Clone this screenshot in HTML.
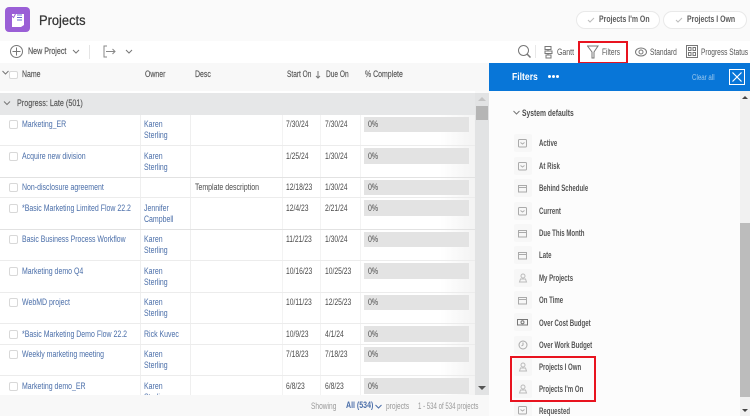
<!DOCTYPE html>
<html><head><meta charset="utf-8">
<style>
html,body{margin:0;padding:0}
body{width:750px;height:416px;overflow:hidden;background:#fafafa;position:relative;font-family:"Liberation Sans",sans-serif;color:#4b4b4b}
#w{position:absolute;left:0;top:0;width:750px;height:416px;overflow:hidden;filter:blur(.35px)}
#w div,#w span,#w svg{position:absolute}
.t{font-size:9px;line-height:11px;white-space:nowrap;transform:scaleX(.775);transform-origin:0 0}
.s{transform:scaleX(.735)}
.d{transform:scaleX(.75)}
.l{color:#4a6ea9}
.h{font-size:8.8px;font-weight:400;color:#555;line-height:11px;white-space:nowrap;-webkit-text-stroke:.15px #555;transform:scaleX(.79);transform-origin:0 0}
.bar{left:364px;width:105px;background:#e3e3e3}
.sep{left:0;width:475px;height:1px;background:#ececec}
.cb{left:9px;width:8.500px;height:8.500px;box-sizing:border-box;border:1px solid #d8d8d8;border-radius:2px;background:#fff}
.ico{left:514px;width:18px;height:18px;background:#f7f7f7;border-radius:2px}
.f{left:538.5px;font-size:8.800px;font-weight:700;color:#555;line-height:11px;white-space:nowrap;transform:scaleX(.69);transform-origin:0 0}
.red{border:2px solid #e8131f;box-sizing:border-box}
svg{fill:none;stroke:#777;stroke-width:1}
</style></head><body><div id="w">

<div style="left:0;top:0;width:750px;height:41px;background:#fafafa"></div>
<div style="left:5px;top:7px;width:25px;height:25px;background:#9a5fd6;border-radius:4px"></div>
<svg style="left:5px;top:7px" width="25" height="25" viewBox="0 0 25 25"><path d="M7 7H19V18L16 20H7Z" fill="#fff" stroke="none"/><path d="M7 9l1.500 1.500L10.500 7" stroke="#9a5fd6"/><path d="M12 8h5M12 10.500h5M12 13h5" stroke="#6a6fd0"/></svg>
<span style="left:39px;top:11px;font-size:14px;line-height:18px;font-weight:400;color:#333;-webkit-text-stroke:.25px #333;transform:scaleX(.92);transform-origin:0 0">Projects</span>

<div style="left:576px;top:11px;width:82px;height:16px;border:1px solid #e9e9e9;border-radius:9px;background:#fff"></div>
<svg style="left:587px;top:16px" width="8" height="8"><path d="M1 4l2 2 4-4" stroke="#bbb"/></svg>
<span class="t" style="left:599px;top:14px;font-weight:700;color:#5c5c5c;transform:scaleX(.77)">Projects I'm On</span>
<div style="left:663px;top:11px;width:82px;height:16px;border:1px solid #e9e9e9;border-radius:9px;background:#fff"></div>
<svg style="left:675px;top:16px" width="8" height="8"><path d="M1 4l2 2 4-4" stroke="#bbb"/></svg>
<span class="t" style="left:687px;top:14px;font-weight:700;color:#5c5c5c;transform:scaleX(.77)">Projects I Own</span>

<div style="left:0;top:41px;width:750px;height:22px;background:#fff"></div>
<svg style="left:9px;top:44px" width="15" height="15"><circle cx="7.500" cy="7.500" r="6"/><path d="M7.500 3.500v8M3.500 7.500h8"/></svg>
<span class="h" style="left:28px;top:46px;font-size:9.200px;transform:scaleX(.775)">New Project</span>
<svg style="left:72px;top:48px" width="8" height="7"><path d="M1 2l3 3 3-3"/></svg>
<div style="left:89px;top:45px;width:1px;height:14px;background:#e5e5e5"></div>
<svg style="left:103px;top:45px" width="14" height="14"><path d="M4 1H1V12H4M3 6.500H12M9.500 4L12 6.500 9.500 9" stroke="#888"/></svg>
<svg style="left:125px;top:48px" width="8" height="7"><path d="M1 2l3 3 3-3"/></svg>

<svg style="left:517px;top:44px" width="15" height="15"><circle cx="6.500" cy="6.500" r="5"/><path d="M10 10l3.500 3.500" stroke-width="1.500"/></svg>
<div style="left:535px;top:45px;width:1px;height:13px;background:#e8e8e8"></div>
<svg style="left:543px;top:45px" width="11" height="14"><path d="M2 1.500H8V4.500H2ZM5 4.500V6M2 6H9V8.500H2ZM5 8.500V10M3 10H8V13H3Z"/></svg>
<span class="t" style="left:557px;top:47px;color:#555">Gantt</span>
<div class="red" style="left:578px;top:41px;width:50px;height:23px;background:#fff"></div>
<svg style="left:587px;top:45px" width="12" height="14"><path d="M.500 1H11L7 7V13H5V7Z"/></svg>
<span class="t s" style="left:602px;top:47px;color:#555">Filters</span>
<svg style="left:635px;top:46px" width="12" height="12"><ellipse cx="6" cy="6" rx="5.500" ry="4"/><circle cx="6" cy="6" r="2"/></svg>
<span class="t s" style="left:650px;top:47px;color:#555">Standard</span>
<svg style="left:686px;top:45px" width="12" height="13"><path d="M.500.500H11.500V12.500H.500ZM2.500 2.500H5V5.500H2.500ZM7 2.500H9.500V5.500H7ZM2.500 7.500H5V10.500H2.500ZM7 7.500H9.500V10.500H7Z"/></svg>
<span class="t s" style="left:701px;top:47px;color:#555">Progress Status</span>

<div style="left:0;top:63px;width:489px;height:28px;background:#f8f8f8"></div>
<div style="left:0;top:91px;width:475px;height:2px;background:#fff"></div>
<svg style="left:2px;top:70px" width="7" height="6"><path d="M.500 1l3 3 3-3"/></svg>
<div class="cb" style="top:70.500px"></div>
<span class="h" style="left:22px;top:69px">Name</span>
<span class="h" style="left:145px;top:69px">Owner</span>
<span class="h" style="left:195px;top:69px">Desc</span>
<span class="h" style="left:286.500px;top:69px;transform:scaleX(.745)">Start On</span>
<svg style="left:315px;top:71px" width="6" height="8"><path d="M3 0v7M1 5l2 2 2-2" stroke="#777"/></svg>
<span class="h" style="left:326px;top:69px;transform:scaleX(.745)">Due On</span>
<span class="h" style="left:365px;top:69px">% Complete</span>

<div style="left:0;top:93px;width:475px;height:22px;background:#e6e7e8"></div>
<svg style="left:3px;top:100px" width="8" height="7"><path d="M1 1.500l3 3 3-3"/></svg>
<span class="h" style="left:17px;top:98px;transform:scaleX(.82)">Progress: Late (501)</span>

<div style="left:0;top:115px;width:475px;height:280px;background:#fff"></div>
<div style="left:440px;top:115px;width:35px;height:280px;background:linear-gradient(90deg,rgba(244,244,244,0),#f3f3f3)"></div>
<div style="left:140px;top:115px;width:1px;height:280px;background:#efefef"></div>
<div style="left:190px;top:115px;width:1px;height:280px;background:#efefef"></div>
<div style="left:282px;top:115px;width:1px;height:280px;background:#f3f3f3"></div>
<div style="left:320px;top:115px;width:1px;height:280px;background:#f3f3f3"></div>
<div style="left:360px;top:115px;width:1px;height:280px;background:#f3f3f3"></div>
<div class="sep" style="top:145px"></div><div class="sep" style="top:177px;background:#e2e2e2"></div><div class="sep" style="top:197px"></div><div class="sep" style="top:229px;background:#e2e2e2"></div><div class="sep" style="top:260px"></div><div class="sep" style="top:292px"></div><div class="sep" style="top:323px"></div><div class="sep" style="top:344px"></div><div class="sep" style="top:375px"></div>

<div class="cb" style="top:120px"></div><span class="t l" style="left:21.500px;top:119px">Marketing_ER</span><span class="t l" style="left:144px;top:119px">Karen</span><span class="t l" style="left:144px;top:130px">Sterling</span><span class="t d" style="left:286px;top:119px">7/30/24</span><span class="t d" style="left:325px;top:119px">7/30/24</span><div class="bar" style="top:117px;height:15px"></div><span class="t" style="left:368px;top:119px">0%</span>

<div class="cb" style="top:152px"></div><span class="t l" style="left:21.500px;top:151px">Acquire new division</span><span class="t l" style="left:144px;top:151px">Karen</span><span class="t l" style="left:144px;top:162px">Sterling</span><span class="t d" style="left:286px;top:151px">1/25/24</span><span class="t d" style="left:325px;top:151px">1/30/24</span><div class="bar" style="top:148px;height:16px"></div><span class="t" style="left:368px;top:151px">0%</span>

<div class="cb" style="top:183px"></div><span class="t l" style="left:21.500px;top:182px">Non-disclosure agreement</span><span class="t" style="left:195px;top:182px">Template description</span><span class="t d" style="left:286px;top:182px">12/18/23</span><span class="t d" style="left:325px;top:182px">1/30/24</span><div class="bar" style="top:180px;height:15px"></div><span class="t" style="left:368px;top:182px">0%</span>

<div class="cb" style="top:204px"></div><span class="t l" style="left:21.500px;top:203px">*Basic Marketing Limited Flow 22.2</span><span class="t l" style="left:144px;top:203px">Jennifer</span><span class="t l" style="left:144px;top:214px">Campbell</span><span class="t d" style="left:286px;top:203px">12/4/23</span><span class="t d" style="left:325px;top:203px">2/21/24</span><div class="bar" style="top:200px;height:16px"></div><span class="t" style="left:368px;top:203px">0%</span>

<div class="cb" style="top:235px"></div><span class="t l" style="left:21.500px;top:234px;transform:scaleX(.765)">Basic Business Process Workflow</span><span class="t l" style="left:144px;top:234px">Karen</span><span class="t l" style="left:144px;top:245px">Sterling</span><span class="t d" style="left:286px;top:234px">11/21/23</span><span class="t d" style="left:325px;top:234px">1/30/24</span><div class="bar" style="top:232px;height:15px"></div><span class="t" style="left:368px;top:234px">0%</span>

<div class="cb" style="top:267px"></div><span class="t l" style="left:21.500px;top:266px">Marketing demo Q4</span><span class="t l" style="left:144px;top:266px">Karen</span><span class="t l" style="left:144px;top:277px">Sterling</span><span class="t d" style="left:286px;top:266px">10/16/23</span><span class="t d" style="left:325px;top:266px">10/25/23</span><div class="bar" style="top:263px;height:16px"></div><span class="t" style="left:368px;top:266px">0%</span>

<div class="cb" style="top:298px"></div><span class="t l" style="left:21.500px;top:297px">WebMD project</span><span class="t l" style="left:144px;top:297px">Karen</span><span class="t l" style="left:144px;top:308px">Sterling</span><span class="t d" style="left:286px;top:297px">10/11/23</span><span class="t d" style="left:325px;top:297px">12/25/23</span><div class="bar" style="top:295px;height:15px"></div><span class="t" style="left:368px;top:297px">0%</span>

<div class="cb" style="top:330px"></div><span class="t l" style="left:21.500px;top:329px">*Basic Marketing Demo Flow 22.2</span><span class="t l" style="left:144px;top:329px">Rick Kuvec</span><span class="t d" style="left:286px;top:329px">10/9/23</span><span class="t d" style="left:325px;top:329px">4/1/24</span><div class="bar" style="top:326px;height:16px"></div><span class="t" style="left:368px;top:329px">0%</span>

<div class="cb" style="top:350px"></div><span class="t l" style="left:21.500px;top:349px">Weekly marketing meeting</span><span class="t l" style="left:144px;top:349px">Karen</span><span class="t l" style="left:144px;top:360px">Sterling</span><span class="t d" style="left:286px;top:349px">7/18/23</span><span class="t d" style="left:325px;top:349px">7/18/23</span><div class="bar" style="top:347px;height:15px"></div><span class="t" style="left:368px;top:349px">0%</span>

<div class="cb" style="top:382px"></div><span class="t l" style="left:21.500px;top:381px">Marketing demo_ER</span><span class="t l" style="left:144px;top:381px">Karen</span><span class="t l" style="left:144px;top:392px">Sterling</span><span class="t d" style="left:286px;top:381px">6/8/23</span><span class="t d" style="left:325px;top:381px">6/8/23</span><div class="bar" style="top:378px;height:16px"></div><span class="t" style="left:368px;top:381px">0%</span>

<div style="left:0;top:395px;width:489px;height:21px;background:#f8f8f8"></div>
<span class="t s" style="left:311px;top:401px;color:#999">Showing</span>
<span class="t" style="left:345.500px;top:400px;color:#4a6ea9;font-weight:700;font-size:9.200px;transform:scaleX(.765)">All (534)</span>
<svg style="left:375px;top:404px" width="7" height="6"><path d="M.500 1l3 3 3-3" stroke="#4a6ea9"/></svg>
<span class="t s" style="left:386px;top:401px;color:#999">projects</span>
<span class="t" style="left:418px;top:401px;color:#999;transform:scaleX(.675)">1 - 534 of 534 projects</span>

<div style="left:475px;top:93px;width:14px;height:302px;background:#e2e3e4"></div>
<div style="left:476px;top:106px;width:12px;height:14px;background:#b5b5b5"></div>
<svg style="left:477px;top:96px" width="10" height="6"><path d="M1 5h8L5 1Z" fill="#c4c4c4" stroke="none"/></svg>
<svg style="left:477px;top:385px" width="10" height="6"><path d="M1 1h8L5 5Z" fill="#555" stroke="none"/></svg>

<div style="left:489px;top:91px;width:261px;height:325px;background:#fcfcfc"></div>
<div style="left:489px;top:63px;width:261px;height:28px;background:#0876d8"></div>
<span style="left:512px;top:70px;font-size:10.500px;line-height:14px;font-weight:700;color:#fff;transform:scaleX(.82);transform-origin:0 0">Filters</span>
<span style="left:548px;top:75px;width:3px;height:3px;background:#fff;border-radius:50%"></span>
<span style="left:552px;top:75px;width:3px;height:3px;background:#fff;border-radius:50%"></span>
<span style="left:556px;top:75px;width:3px;height:3px;background:#fff;border-radius:50%"></span>
<span class="t" style="left:692px;top:71.500px;font-size:8px;color:#9cc9ee;transform:scaleX(.77)">Clear all</span>
<div style="left:729px;top:69px;width:16px;height:16px;border:1.500px solid #fff;box-sizing:border-box"></div>
<svg style="left:729px;top:69px" width="16" height="16"><path d="M3.500 3.500l9 9M12.500 3.500l-9 9" stroke="#fff" stroke-width="1.200"/></svg>

<svg style="left:513px;top:110px" width="7" height="6"><path d="M.500 1l3 3 3-3"/></svg>
<span class="t" style="left:522px;top:108px;font-weight:700;color:#4f4f4f;transform:scaleX(.75)">System defaults</span>

<div class="ico" style="top:134px"></div><svg style="left:518px;top:139px" width="10" height="9"><rect x=".5" y=".5" width="8" height="7.500" rx="1" stroke="#aaa"/><path d="M2.500 3.500l2 1.500 2-1.500" stroke="#aaa"/></svg><span class="f" style="top:138px">Active</span>
<div class="ico" style="top:157px"></div><svg style="left:518px;top:162px" width="10" height="9"><rect x=".5" y=".5" width="8" height="7.500" rx="1" stroke="#aaa"/><path d="M2.500 3.500l2 1.500 2-1.500" stroke="#aaa"/></svg><span class="f" style="top:161px">At Risk</span>
<div class="ico" style="top:179px"></div><svg style="left:518px;top:184px" width="10" height="9"><path d="M.5 1.500H8.500V8H.5ZM.5 3.500H8.500" stroke="#aaa"/></svg><span class="f" style="top:183px">Behind Schedule</span>
<div class="ico" style="top:202px"></div><svg style="left:518px;top:207px" width="10" height="9"><rect x=".5" y=".5" width="8" height="7.500" rx="1" stroke="#aaa"/><path d="M2.500 3.500l2 1.500 2-1.500" stroke="#aaa"/></svg><span class="f" style="top:205.500px">Current</span>
<div class="ico" style="top:224px"></div><svg style="left:518px;top:229px" width="10" height="9"><path d="M.5 1.500H8.500V8H.5ZM.5 3.500H8.500" stroke="#aaa"/></svg><span class="f" style="top:228px">Due This Month</span>
<div class="ico" style="top:246px"></div><svg style="left:518px;top:251px" width="10" height="9"><path d="M.5 1.500H8.500V8H.5ZM.5 3.500H8.500" stroke="#aaa"/></svg><span class="f" style="top:250px">Late</span>
<div class="ico" style="top:269px"></div><svg style="left:518px;top:273px" width="10" height="10"><circle cx="5" cy="3" r="2" stroke="#bbb"/><path d="M1.500 9l1-3h5l1 3Z" stroke="#bbb"/></svg><span class="f" style="top:272.500px">My Projects</span>
<div class="ico" style="top:291px"></div><svg style="left:518px;top:296px" width="10" height="9"><path d="M.5 1.500H8.500V8H.5ZM.5 3.500H8.500" stroke="#aaa"/></svg><span class="f" style="top:295px">On Time</span>
<div class="ico" style="top:313px"></div><svg style="left:517px;top:319px" width="11" height="7"><rect x=".5" y=".5" width="10" height="5.500" stroke="#777"/><circle cx="5.500" cy="3.200" r="1.500" stroke="#777"/></svg><span class="f" style="top:317.500px">Over Cost Budget</span>
<div class="ico" style="top:336px"></div><svg style="left:518px;top:340px" width="10" height="10"><circle cx="5" cy="5" r="4" stroke="#aaa"/><path d="M5 2.500V5L3.500 6" stroke="#aaa"/></svg><span class="f" style="top:339.500px">Over Work Budget</span>
<div class="ico" style="top:358px"></div><svg style="left:518px;top:362px" width="10" height="10"><circle cx="5" cy="3" r="2" stroke="#bbb"/><path d="M1.500 9l1-3h5l1 3Z" stroke="#bbb"/></svg><span class="f" style="top:362px">Projects I Own</span>
<div class="ico" style="top:380px"></div><svg style="left:518px;top:384px" width="10" height="10"><circle cx="5" cy="3" r="2" stroke="#bbb"/><path d="M1.500 9l1-3h5l1 3Z" stroke="#bbb"/></svg><span class="f" style="top:384px">Projects I'm On</span>
<div class="ico" style="top:402px"></div><svg style="left:518px;top:406px" width="10" height="9"><rect x=".5" y=".5" width="8" height="7.500" rx="1" stroke="#aaa"/><path d="M2.500 3.500l2 1.500 2-1.500" stroke="#aaa"/></svg><span class="f" style="top:406px">Requested</span>
<div class="red" style="left:510px;top:356px;width:86px;height:46px"></div>

<div style="left:740px;top:91px;width:10px;height:325px;background:#f1f1f1"></div>
<div style="left:740px;top:223px;width:10px;height:174px;background:#bcbcbc"></div>
<svg style="left:741px;top:95px" width="8" height="5"><path d="M1 4h6L4 1Z" fill="#444" stroke="none"/></svg>
<svg style="left:741px;top:408px" width="8" height="5"><path d="M1 1h6L4 4Z" fill="#444" stroke="none"/></svg>

</div></body></html>
